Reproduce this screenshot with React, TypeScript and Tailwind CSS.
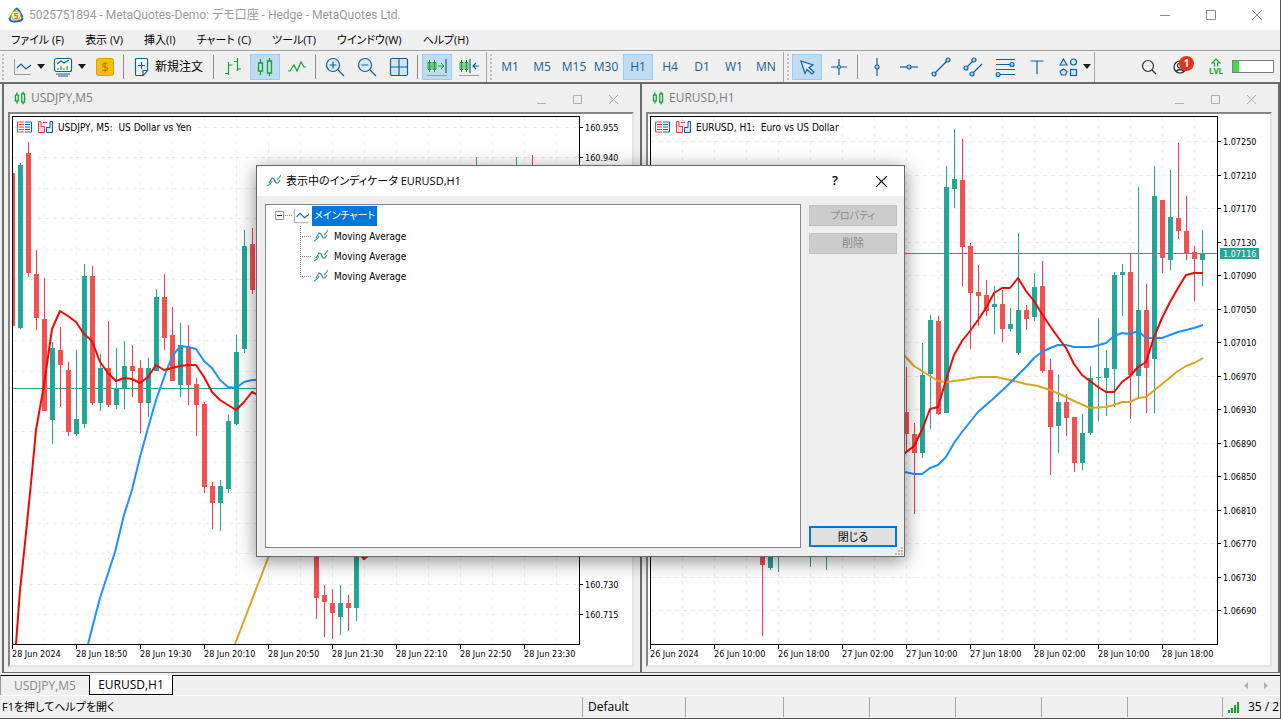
import React from 'react'
import type { ReactNode } from 'react'

const BLUE = '#0f6299'
const GREEN = '#12a52c'
const UP = '#22a699'
const DOWN = '#f2524f'

// x, high, low, body top, body bottom, direction
type Candle = [number, number, number, number, number, 'u' | 'd']

const usdjpyCandles: Candle[] = [
  [12, 173, 326, 173, 326, 'd'],
  [20, 163, 329, 165, 328, 'u'],
  [28, 142, 277, 153, 273, 'd'],
  [36, 250, 330, 274, 318, 'd'],
  [44, 278, 411, 319, 411, 'd'],
  [52, 342, 444, 348, 420, 'u'],
  [60, 327, 407, 350, 365, 'd'],
  [68, 362, 436, 370, 432, 'd'],
  [76, 350, 436, 419, 434, 'u'],
  [84, 264, 428, 276, 424, 'u'],
  [92, 266, 405, 276, 403, 'd'],
  [100, 354, 411, 368, 403, 'u'],
  [108, 321, 407, 368, 405, 'd'],
  [116, 348, 409, 388, 405, 'u'],
  [124, 341, 409, 366, 388, 'u'],
  [132, 345, 397, 366, 371, 'd'],
  [140, 360, 433, 368, 403, 'd'],
  [148, 358, 417, 368, 403, 'u'],
  [156, 289, 371, 297, 371, 'u'],
  [164, 274, 350, 297, 338, 'd'],
  [172, 307, 381, 335, 381, 'd'],
  [180, 323, 397, 345, 385, 'u'],
  [188, 325, 405, 348, 385, 'd'],
  [196, 378, 436, 384, 405, 'd'],
  [204, 402, 493, 404, 487, 'd'],
  [212, 482, 529, 486, 503, 'd'],
  [220, 480, 531, 486, 503, 'u'],
  [228, 415, 493, 421, 489, 'u'],
  [236, 335, 425, 352, 424, 'u'],
  [244, 230, 353, 246, 349, 'u'],
  [252, 228, 294, 244, 290, 'd'],
  [316, 520, 619, 530, 598, 'd'],
  [324, 585, 637, 595, 602, 'd'],
  [332, 589, 639, 603, 613, 'd'],
  [340, 585, 635, 603, 617, 'u'],
  [348, 595, 631, 603, 608, 'd'],
  [356, 500, 621, 520, 608, 'u'],
  [476, 157, 200, 180, 200, 'u'],
  [516, 157, 200, 180, 200, 'u'],
  [532, 155, 200, 180, 200, 'd'],
]

const eurusdCandles: Candle[] = [
  [762, 500, 636, 530, 565, 'd'],
  [770, 500, 570, 520, 568, 'u'],
  [778, 500, 572, 510, 540, 'u'],
  [810, 500, 567, 510, 540, 'u'],
  [826, 500, 570, 510, 540, 'u'],
  [906, 367, 452, 412, 434, 'd'],
  [914, 423, 514, 434, 453, 'd'],
  [922, 343, 458, 375, 453, 'u'],
  [930, 315, 429, 320, 374, 'u'],
  [938, 316, 415, 321, 414, 'd'],
  [946, 166, 413, 187, 413, 'u'],
  [954, 129, 208, 179, 189, 'u'],
  [962, 139, 286, 180, 247, 'd'],
  [970, 243, 349, 246, 293, 'd'],
  [978, 265, 326, 292, 296, 'd'],
  [986, 280, 316, 295, 311, 'd'],
  [994, 286, 334, 304, 307, 'u'],
  [1002, 290, 342, 304, 329, 'd'],
  [1010, 308, 332, 324, 329, 'u'],
  [1018, 233, 355, 310, 353, 'u'],
  [1026, 305, 330, 310, 319, 'd'],
  [1034, 273, 321, 287, 317, 'u'],
  [1042, 261, 373, 286, 371, 'd'],
  [1050, 359, 475, 370, 427, 'd'],
  [1058, 375, 453, 402, 426, 'u'],
  [1066, 394, 436, 402, 418, 'd'],
  [1074, 417, 472, 417, 463, 'd'],
  [1082, 414, 470, 433, 463, 'u'],
  [1090, 366, 435, 378, 433, 'u'],
  [1098, 318, 421, 377, 378, 'u'],
  [1106, 350, 416, 368, 378, 'u'],
  [1114, 272, 407, 275, 369, 'u'],
  [1122, 264, 316, 272, 275, 'u'],
  [1130, 253, 419, 272, 375, 'd'],
  [1138, 187, 398, 310, 376, 'u'],
  [1146, 284, 413, 310, 368, 'd'],
  [1154, 166, 413, 196, 359, 'u'],
  [1162, 200, 273, 200, 258, 'd'],
  [1170, 170, 270, 217, 260, 'u'],
  [1178, 143, 239, 218, 231, 'd'],
  [1186, 196, 260, 231, 253, 'd'],
  [1194, 246, 301, 252, 259, 'd'],
  [1202, 230, 286, 253, 260, 'u'],
]

interface ChartData {
  symbol: string
  title: string
  x: number
  firstLabel: number
  step: number
  prices: string[]
  times: string[]
  candles: Candle[]
  averages: { color: string; points: string }[]
  priceLine: number
  bid?: string
}

const usdjpy: ChartData = {
  symbol: 'USDJPY,M5',
  title: 'USDJPY, M5:  US Dollar vs Yen',
  x: 13,
  firstLabel: 127,
  step: 30.44,
  prices: Array.from({ length: 17 }, (_, i) => (160.955 - i * 0.015).toFixed(3)),
  times: ['28 Jun 2024', '28 Jun 18:50', '28 Jun 19:30', '28 Jun 20:10', '28 Jun 20:50', '28 Jun 21:30', '28 Jun 22:10', '28 Jun 22:50', '28 Jun 23:30'],
  candles: usdjpyCandles,
  averages: [
    { color: '#daa520', points: '235,644 260,579 270,553' },
    { color: '#1e90ff', points: '88,644 100,598 115,552 124,515 132,490 140,457 148,428 156,400 166,372 172,357 180,346 188,347 196,349 204,361 212,368 220,380 228,387 236,388 244,382 252,380 260,380' },
    { color: '#f00808', points: '16,644 20,590 25,543 31,483 36,430 44,385 52,329 60,311 68,316 76,322 84,334 92,341 100,362 108,373 116,381 124,378 132,379 140,383 148,377 156,365 164,370 172,368 180,366 188,365 196,365 204,377 212,392 220,400 228,405 236,410 244,402 252,392 260,396' },
    { color: '#f00808', points: '358,552 364,559 372,553' },
  ],
  priceLine: 388,
}

const eurusd: ChartData = {
  symbol: 'EURUSD,H1',
  title: 'EURUSD, H1:  Euro vs US Dollar',
  x: 651,
  firstLabel: 141,
  step: 33.5,
  prices: Array.from({ length: 15 }, (_, i) => (1.0725 - i * 0.0004).toFixed(5)),
  times: ['26 Jun 2024', '26 Jun 10:00', '26 Jun 18:00', '27 Jun 02:00', '27 Jun 10:00', '27 Jun 18:00', '28 Jun 02:00', '28 Jun 10:00', '28 Jun 18:00'],
  candles: eurusdCandles,
  averages: [
    { color: '#daa520', points: '900,350 905,356 914,366 922,371 930,376 938,381 946,382 962,380 980,377 996,377 1010,380 1026,384 1038,386 1050,390 1062,395 1074,401 1090,408 1106,407 1114,405 1122,402 1130,402 1138,398 1146,397 1162,384 1178,371 1186,366 1194,363 1203,358' },
    { color: '#1e90ff', points: '900,470 905,472 914,474 922,474 930,468 938,465 946,457 954,443 962,432 978,412 994,398 1010,383 1026,367 1034,358 1042,352 1050,348 1058,345 1066,345 1074,347 1092,347 1106,343 1114,336 1122,333 1130,334 1138,331 1146,338 1162,338 1178,332 1194,328 1203,325' },
    { color: '#f00808', points: '900,457 905,453 914,446 922,430 930,409 938,407 946,380 954,355 962,341 970,331 978,320 986,308 994,293 1002,288 1010,288 1018,278 1026,291 1034,301 1042,314 1050,326 1060,340 1066,348 1074,364 1082,375 1090,381 1098,387 1106,392 1114,392 1122,382 1130,376 1138,367 1146,362 1154,337 1162,318 1170,302 1178,288 1186,275 1194,273 1203,273' },
  ],
  priceLine: 253,
  bid: '1.07116',
}

const TOP = 117

const CandlesIcon = ({ small }: { small?: boolean }) => (
  <svg width={small ? 14 : 20} height={small ? 14 : 20} viewBox="0 0 20 20" fill="none" stroke={GREEN} strokeWidth={small ? 1.9 : 1.3}>
    <path d="M5.500 2v4M5.500 14v4M3.500 6h4v8h-4zM14.500 1v3M14.500 16v3M12.500 4h4v12h-4z" />
  </svg>
)

const IndicatorIcon = () => (
  <svg width="14" height="14" viewBox="0 0 14 14" fill="none" strokeWidth="1.1">
    <path d="M2 9l3-5 2 1 2 4 2 0 2-3" stroke="#2f78a8" />
    <path d="M0 12l3-2 2-3M8 7l1 2M10 6l2-2 2-3" stroke="#2fae5a" />
  </svg>
)

const MiniChart = ({ size = 18 }: { size?: number }) => (
  <svg width={size} height={size} viewBox="0 0 18 18" fill="none">
    <path d="M1.500 1v15.500h16" stroke="#9a9a9a" />
    <path d="M4 10l4-4 5 5 5-4" stroke={BLUE} strokeWidth="1.200" />
  </svg>
)

const Chevron = () => (
  <svg width="8" height="5" viewBox="0 0 8 5">
    <path d="M0 0h8L4 5z" fill="#1a1a1a" />
  </svg>
)

const WindowControls = ({ small }: { small?: boolean }) => {
  const box = small ? 'flex h-7 w-9 items-center justify-center pt-[3px]' : 'flex h-7 w-[46px] items-center justify-center'
  const stroke = small ? '#adadad' : '#8c8c8c'
  return (
    <div className="flex">
      <button aria-label="最小化" className={box}>
        <svg width="10" height="10" fill="none" stroke={stroke}><path d={small ? 'M0 8.500h9' : 'M0 5.500h10'} /></svg>
      </button>
      <button aria-label="最大化" className={box}>
        <svg width="10" height="10" fill="none" stroke={stroke}><path d={small ? 'M.5 .5h8v8h-8z' : 'M.5 .5h9v9h-9z'} /></svg>
      </button>
      <button aria-label="閉じる" className={box}>
        <svg width="10" height="10" fill="none" stroke={stroke}><path d={small ? 'M0 0l9 9M9 0L0 9' : 'M0 0l10 10M10 0L0 10'} /></svg>
      </button>
    </div>
  )
}

const Chart = ({ data }: { data: ChartData }) => {
  const shift = `translate(${-data.x} ${-TOP})`
  const labelY = data.prices.map((_, i) => Math.round(data.firstLabel + i * data.step))
  return (
    <section className="flex min-w-0 flex-col border-b border-l-2 border-[#6b6b6b] bg-[#efefef] pr-[6px] pb-[5px] pl-1">
      <header className="flex h-7 shrink-0 items-center pr-[2px] pl-[5px] text-[#7d7d7d]">
        <CandlesIcon small />
        <h2 className="ml-1 flex-1 text-xs">{data.symbol}</h2>
        <WindowControls small />
      </header>
      <div className="flex min-h-0 flex-1 flex-col border-2 border-t-[#858585] border-r-[#e3e3e3] border-b-[#e3e3e3] border-l-[#858585] bg-white pt-[2px] pl-[2px] font-['DejaVu_Sans_Condensed','DejaVu_Sans',sans-serif] text-[9px] text-black">
        <div className="flex min-h-0 flex-1">
          <div className="relative min-w-0 flex-1 border border-black">
            <svg className="absolute inset-0 h-full w-full" shapeRendering="crispEdges">
              <g transform={shift}>
                <g stroke="#ececec" strokeDasharray="4 4">
                  {data.prices.map((p, i) => (
                    <path key={p} d={`M${data.x} ${labelY[i] + 0.5}h900`} />
                  ))}
                  {Array.from({ length: 18 }, (_, i) => (
                    <path key={i} d={`M${data.x + 31.5 + i * 32} ${TOP}v900`} />
                  ))}
                </g>
                <path d={`M${data.x} ${data.priceLine + 0.5}h900`} stroke={UP} />
                {data.candles.map(([x, high, low, top, bottom, dir]) => (
                  <g key={x} fill={dir === 'u' ? UP : DOWN}>
                    <rect x={x} y={high} width="1" height={low - high} fill={dir === 'u' ? UP : '#f03a50'} />
                    <rect x={x - 2} y={top} width="5" height={bottom - top} />
                  </g>
                ))}
                <g fill="none" strokeWidth="2" strokeLinejoin="round" shapeRendering="auto">
                  {data.averages.map((a) => (
                    <polyline key={a.points} points={a.points} stroke={a.color} />
                  ))}
                </g>
              </g>
            </svg>
            <div className="absolute top-1 left-1 flex items-start">
              <svg width="15" height="12" fill="none">
                <path d="M7 1H.5v10H7M2 3.500h5M2 6h5M2 8.500h5" stroke="#d9414e" />
                <path d="M8 1h6.500v10H8M8 3.500h5M8 6h5M8 8.500h5" stroke={BLUE} />
              </svg>
              <svg className="ml-[6px]" width="16" height="12" fill="none">
                <path d="M3 .5H.5v11h6V5.500H3z" stroke="#d9414e" fill="#fde0e0" />
                <path d="M12 .5h2.500v11h-6v-5H12z" stroke={BLUE} fill="#cfe8f8" />
                <path d="M5 1.500h4" stroke="#d9414e" />
              </svg>
              <span className="ml-1 pt-px text-[10px] leading-3 whitespace-pre">{data.title}</span>
            </div>
          </div>
          <svg className="h-full w-[52px] shrink-0">
            {data.prices.map((p, i) => (
              <g key={p}>
                <path d={`M0 ${labelY[i] - TOP + 1.5}h3`} stroke="#000" />
                <text x="5" y={labelY[i] - TOP + 5}>{p}</text>
              </g>
            ))}
            {data.bid && (
              <g>
                <rect x="2" y={data.priceLine - TOP - 4} width="39" height="11" fill={UP} />
                <text x="5" y={data.priceLine - TOP + 5} fill="#fff">{data.bid}</text>
              </g>
            )}
          </svg>
        </div>
        <svg className="h-5 w-full shrink-0 overflow-visible">
          {data.times.map((t, i) => (
            <g key={t}>
              <path d={`M${i * 64 + 0.5} 0v4`} stroke="#000" />
              <text x={i * 64} y="12">{t}</text>
            </g>
          ))}
        </svg>
      </div>
    </section>
  )
}

const Tool = ({ label, active, children }: { label: string; active?: boolean; children: ReactNode }) => (
  <button
    aria-label={label}
    className={`flex h-[26px] w-[30px] shrink-0 items-center justify-center ${active ? 'border border-[#99cdf5] bg-[#c0dcf3]' : ''}`}
  >
    {children}
  </button>
)

const Icon = ({ children, color = BLUE }: { children: ReactNode; color?: string }) => (
  <svg className="shrink-0" width="20" height="20" viewBox="0 0 20 20" fill="none" stroke={color} strokeWidth="1.200">
    {children}
  </svg>
)

const Divider = () => <span className="ml-px h-6 w-[3px] shrink-0 border-l border-[#8f8f8f]" />

const Grip = () => (
  <span className="flex h-[30px] w-[7px] shrink-0 items-center justify-between border-l border-[#a8a8a8]">
    <span className="ml-[3px] h-[26px] border-l-2 border-dotted border-[#bdbdbd]" />
  </span>
)

const frames = ['M1', 'M5', 'M15', 'M30', 'H1', 'H4', 'D1', 'W1', 'MN']

const Toolbar = () => (
  <div className="flex h-8 shrink-0 items-center gap-[2px] border-t border-[#a3a3a3] pl-[2px]">
    <span className="h-[26px] w-1 shrink-0 border-l-2 border-dotted border-[#bdbdbd]" />
    <button aria-label="チャート" className="flex h-[26px] w-[39px] shrink-0 items-center gap-[6px] pl-[5px]">
      <MiniChart />
      <Chevron />
    </button>
    <button aria-label="テンプレート" className="flex h-[26px] w-[39px] shrink-0 items-center gap-[5px] pl-1">
      <Icon>
        <rect x="1.500" y="1.500" width="17" height="13" rx="2" fill="#fff" />
        <path d="M3 17h14M5 19h10" />
        <path d="M4 7l4-3 3 2 5-3" />
        <path d="M5 13v-2M8 13V9M11 13v-2M14 13V9" stroke={GREEN} />
      </Icon>
      <Chevron />
    </button>
    <Tool label="取引">
      <svg width="18" height="18">
        <rect x=".5" y=".5" width="17" height="17" rx="2" fill="#fdbd10" stroke="#dd9e08" />
        <text x="9" y="14" textAnchor="middle" className="text-[13px]" fill="#a87400">$</text>
      </svg>
    </Tool>
    <Divider />
    <button className="flex h-[26px] w-[82px] shrink-0 items-center pl-1 text-xs whitespace-nowrap">
      <Icon>
        <path d="M3.500 2.500q0-1 1-1h10q1 0 1 1v11l-4 5h-7q-1 0-1-1zM11 18v-4.500h4.500" fill="#f6fbff" />
        <path d="M9.500 5v7M6 8.500h7" />
      </Icon>
      <span className="ml-[3px]">新規注文</span>
    </button>
    <Divider />
    <Tool label="バーチャート">
      <Icon color={GREEN}><path d="M5.500 5v13M2 16.500h3.500M5.500 8h4M14.500 1v13M11 4.500h3.500M14.500 12H18" /></Icon>
    </Tool>
    <Tool label="ローソク足" active><CandlesIcon /></Tool>
    <Tool label="ライン">
      <Icon color={GREEN}><path d="M1 14h2l4-6 3 6 4-9 3 5h2" /></Icon>
    </Tool>
    <Divider />
    <Tool label="拡大">
      <Icon><circle cx="8" cy="8" r="6.500" fill="#d6edfb" /><path d="M13 13l6 6M4.500 8h7M8 4.500v7" /></Icon>
    </Tool>
    <Tool label="縮小">
      <Icon><circle cx="8" cy="8" r="6.500" fill="#d6edfb" /><path d="M13 13l6 6M4.500 8h7" /></Icon>
    </Tool>
    <Tool label="整列">
      <Icon><rect x="1.500" y="1.500" width="17" height="17" rx="1.500" fill="#cfe8f8" /><path d="M10 1.500v17M1.500 10h17" /></Icon>
    </Tool>
    <Divider />
    <Tool label="自動スクロール" active>
      <Icon>
        <path d="M2.500 3v12M1 5.500h3v7H1zM7.500 3v12M6 5.500h3v7H6zM11 9h6M14 6l3 3-3 3" stroke={GREEN} strokeWidth="1" />
        <path d="M19 2v14" /><path d="M0 18.500h20" stroke="#9a9a9a" strokeWidth="1" />
      </Icon>
    </Tool>
    <Tool label="チャートシフト">
      <Icon>
        <path d="M2.500 3v12M1 5.500h3v7H1zM7.500 3v12M6 5.500h3v7H6z" stroke={GREEN} strokeWidth="1" />
        <path d="M11 2v14M14 9h6M17 6l-3 3 3 3" /><path d="M0 18.500h20" stroke="#9a9a9a" strokeWidth="1" />
      </Icon>
    </Tool>
    <Grip />
    {frames.map((f) => (
      <button
        key={f}
        className={`flex h-[26px] w-[30px] shrink-0 items-center justify-center text-xs text-[#0f6299] ${f === 'H1' ? 'border border-[#99cdf5] bg-[#c0dcf3]' : ''}`}
      >
        {f}
      </button>
    ))}
    <Grip />
    <Tool label="カーソル" active>
      <Icon><path d="M4 4l12 4-4 2.500 5 4.500-2 2-5-4.500-2 4z" fill="#d6edfb" /></Icon>
    </Tool>
    <Tool label="十字カーソル">
      <Icon><path d="M10 2v16M2 10h16" /><circle cx="10" cy="10" r="1.500" fill="#d6edfb" /></Icon>
    </Tool>
    <Divider />
    <Tool label="垂直線">
      <Icon><path d="M10 1v18" /><circle cx="10" cy="10" r="2" fill="#a8d8f5" /></Icon>
    </Tool>
    <Tool label="水平線">
      <Icon><path d="M1 10h18" /><circle cx="10" cy="10" r="2" fill="#a8d8f5" /></Icon>
    </Tool>
    <Tool label="トレンドライン">
      <Icon><path d="M3 17L17 3" /><circle cx="3" cy="17" r="2" fill="#a8d8f5" /><circle cx="17" cy="3" r="2" fill="#a8d8f5" /></Icon>
    </Tool>
    <Tool label="チャネル">
      <Icon>
        <path d="M3 11l8-8M9 17L19 7" />
        <circle cx="3" cy="11" r="2" fill="#a8d8f5" /><circle cx="11" cy="3" r="2" fill="#a8d8f5" /><circle cx="9" cy="17" r="2" fill="#a8d8f5" />
      </Icon>
    </Tool>
    <Tool label="フィボナッチ">
      <Icon>
        <path d="M1 2.500h19M1 7.500h14M1 12.500h19M5 17.500h15" />
        <circle cx="17" cy="7.500" r="2" fill="#a8d8f5" /><circle cx="3" cy="17.500" r="2" fill="#a8d8f5" />
      </Icon>
    </Tool>
    <Tool label="テキスト">
      <Icon><path d="M3.500 4h13M10 4v13" /></Icon>
    </Tool>
    <button aria-label="オブジェクト" className="flex h-[26px] w-[38px] shrink-0 items-center gap-1 pl-[5px]">
      <Icon>
        <path d="M4.500 2l3.500 6H1z" fill="#cfe8f8" />
        <circle cx="14.500" cy="5" r="3" fill="#cfe8f8" />
        <path d="M4.500 12l3.500 2.500-1.500 3.500h-4L1 14.500z" fill="#cfe8f8" />
        <rect x="11.500" y="12.500" width="6" height="6" fill="#cfe8f8" />
      </Icon>
      <Chevron />
    </button>
    <span className="h-[30px] shrink-0 border-l border-[#a8a8a8]" />
    <div className="ml-auto flex items-center gap-[2px] pr-[6px]">
      <Tool label="検索">
        <Icon color="#2b2b2b"><circle cx="9" cy="9" r="5.500" /><path d="M13 13l4 4" /></Icon>
      </Tool>
      <button aria-label="アカウント" className="relative mr-1 flex h-[26px] w-[30px] items-center justify-center">
        <Icon color="#2b2b2b"><circle cx="9" cy="10" r="6" /><circle cx="9" cy="8.500" r="2.500" /><path d="M5 14.500q4-4 8 0" /></Icon>
        <span className="absolute top-[2px] right-[2px] flex size-[15px] items-center justify-center rounded-full bg-[#e0321c] text-[10px] leading-none font-bold text-white">1</span>
      </button>
      <button aria-label="レベル" className="flex h-[26px] w-7 flex-col items-center justify-center text-[#12a52c]">
        <svg width="10" height="9" fill="none" stroke="currentColor" strokeWidth="1.200"><path d="M3.500 8.500V5H1l4-4 4 4H6.500v3.500" /></svg>
        <span className="text-[8px] leading-[8px] font-bold">LVL</span>
      </button>
      <div className="h-[13px] w-[42px] border border-[#7d7d7d] bg-white">
        <div className="h-full w-[6px] bg-[#45da45]" />
      </div>
    </div>
  </div>
)

const Dialog = () => (
  <div
    role="dialog"
    aria-labelledby="dialog-title"
    className="absolute top-[165px] left-[256px] flex h-[392px] w-[649px] flex-col border border-[#6a6a6a] bg-[#efefef] shadow-[0_4px_18px_rgba(0,0,0,0.45)]"
  >
    <div className="flex h-[30px] shrink-0 items-center bg-white pl-[10px]">
      <IndicatorIcon />
      <h1 id="dialog-title" className="ml-[5px] flex-1 text-[11px]">表示中のインディケータ EURUSD,H1</h1>
      <button aria-label="ヘルプ" className="flex w-[46px] justify-center text-[13px] font-semibold">?</button>
      <button aria-label="閉じる" className="flex h-7 w-[46px] items-center justify-center">
        <svg width="11" height="11" stroke="#000" strokeWidth="1.200"><path d="M0 0l11 11M11 0L0 11" /></svg>
      </button>
    </div>
    <div className="flex min-h-0 flex-1 gap-2 py-2 pr-[7px] pl-2">
      <ul className="flex-1 border border-[#82878f] bg-white pt-px pl-[9px] font-['DejaVu_Sans_Condensed','Noto_Sans_CJK_JP',sans-serif] text-[10px]">
        <li>
          <div className="flex h-5 items-center">
            <svg width="18" height="10" fill="none">
              <path d="M.5 .5h8v8h-8z" stroke="#919191" /><path d="M2 4.500h5" stroke="#333" />
              <path d="M10 4.500h7" stroke="#888" strokeDasharray="1 1" />
            </svg>
            <MiniChart size={16} />
            <span className="ml-[3px] h-5 bg-[#0078d7] px-[2px] leading-5 text-white">メインチャート</span>
          </div>
          <ul>
            {[0, 1, 2].map((i) => (
              <li key={i} className="flex h-5 items-center pl-[25px]">
                <svg width="12" height="20" fill="none" stroke="#888" strokeDasharray="1 1">
                  <path d={i === 2 ? 'M.5 0v10' : 'M.5 0v20'} /><path d="M0 10.500h11" />
                </svg>
                <span className="ml-[2px]"><IndicatorIcon /></span>
                <span className="ml-[6px]">Moving Average</span>
              </li>
            ))}
          </ul>
        </li>
      </ul>
      <div className="flex w-[88px] flex-col gap-[7px] py-px">
        <button disabled className="h-[21px] border border-[#bfbfbf] bg-[#cccccc] text-[10px] text-[#888]">プロパティ</button>
        <button disabled className="h-[21px] border border-[#bfbfbf] bg-[#cccccc] text-[11px] text-[#888]">削除</button>
        <button className="mt-auto h-[21px] border-2 border-[#0078d7] bg-[#e1e1e1] text-[11px] leading-4">閉じる</button>
      </div>
    </div>
    <svg className="absolute right-px bottom-px" width="8" height="8" fill="#bdbdbd">
      <path d="M6 0h2v2H6zM3 3h2v2H3zM6 3h2v2H6zM0 6h2v2H0zM3 6h2v2H3zM6 6h2v2H6z" />
    </svg>
  </div>
)

const menu = ['ファイル (F)', '表示 (V)', '挿入(I)', 'チャート (C)', 'ツール(T)', 'ウインドウ(W)', 'ヘルプ(H)']

const App = () => {
  return (
    <div className="relative flex h-screen flex-col overflow-hidden border-r border-b border-[#555] bg-[#f0f0f0] font-['Open_Sans','Noto_Sans_CJK_JP',sans-serif] text-black [font-feature-settings:'palt']">
      <div className="flex h-[30px] shrink-0 items-center bg-white pl-2">
        <svg width="16" height="16" viewBox="0 0 16 16" fill="none" strokeWidth="2.200">
          <path d="M8 1.500L2 11" stroke="#3f9e46" />
          <path d="M8 1.500q3 0 6.500 9" stroke="#2a6fb3" />
          <path d="M1.500 11q0 4 6.500 3.500t6.500-3.500" stroke="#2d68a8" />
          <circle cx="8" cy="8.500" r="4.500" fill="#fff6d0" stroke="#d8a92c" strokeWidth="1" />
          <text x="8" y="12" textAnchor="middle" className="text-[9px] font-bold" fill="#c98a12">5</text>
        </svg>
        <span className="ml-[5px] flex-1 font-['Roboto','Noto_Sans_CJK_JP',sans-serif] text-xs text-[#9a9a9a]">5025751894 - MetaQuotes-Demo: デモ口座 - Hedge - MetaQuotes Ltd.</span>
        <WindowControls />
      </div>
      <nav className="flex h-5 shrink-0 items-center gap-[21px] pl-[11px] text-[11px]">
        {menu.map((m) => (
          <button key={m} className="leading-5 whitespace-nowrap">{m}</button>
        ))}
      </nav>
      <Toolbar />
      <main className="grid min-h-0 flex-1 grid-cols-2 border-t-2 border-r-2 border-[#6b6b6b] pl-[2px]">
        <Chart data={usdjpy} />
        <Chart data={eurusd} />
      </main>
      <div className="flex h-[22px] shrink-0 pt-[2px] text-xs">
        <button className="w-[89px] border-t border-l border-t-black border-l-[#999] text-[#8a8a8a]">USDJPY,M5</button>
        <button className="h-5 w-[84px] border border-t-0 border-black bg-white">EURUSD,H1</button>
        <div className="flex flex-1 items-center justify-end gap-4 border-t border-black pr-3">
          <button aria-label="前へ"><svg width="4" height="7" fill="#b0b0b0"><path d="M4 0v7L0 3.500z" /></svg></button>
          <button aria-label="次へ"><svg width="4" height="7" fill="#b0b0b0"><path d="M0 0v7l4-3.500z" /></svg></button>
        </div>
      </div>
      <footer className="flex h-[23px] shrink-0 items-center border-t border-white text-xs whitespace-nowrap">
        <span className="flex-1 pl-[2px] text-[11px]">F1を押してヘルプを開く</span>
        <span className="h-5 w-[103px] border-l border-[#a8a8a8] pl-[5px] leading-5">Default</span>
        <span className="h-5 w-[98px] border-l border-[#a8a8a8]" />
        <span className="h-5 w-[86px] border-l border-[#a8a8a8]" />
        <span className="h-5 w-[86px] border-l border-[#a8a8a8]" />
        <span className="h-5 w-[86px] border-l border-[#a8a8a8]" />
        <span className="h-5 w-[86px] border-l border-[#a8a8a8]" />
        <span className="h-5 w-[95px] border-l border-[#a8a8a8]" />
        <span className="flex h-5 w-[58px] items-center border-l border-[#a8a8a8] pl-[5px]">
          <svg width="12" height="12" fill={GREEN}><path d="M0 9h2v3H0zM3 7h2v5H3zM6 4h2v8H6zM9 1h2v11H9z" /></svg>
          <span className="ml-2">35 / 2</span>
        </span>
      </footer>
      <Dialog />
    </div>
  )
}

export default App
